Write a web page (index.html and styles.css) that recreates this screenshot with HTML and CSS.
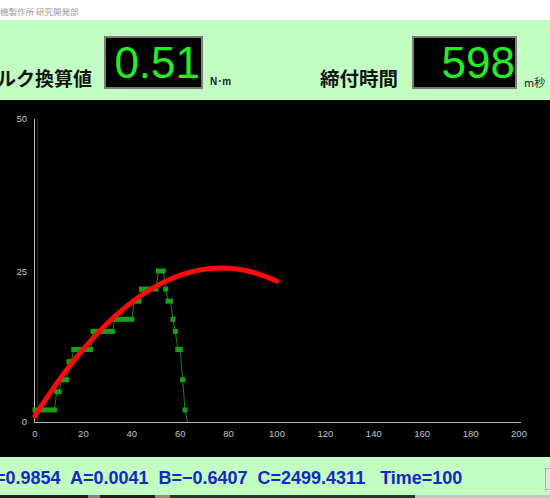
FILE: index.html
```html
<!DOCTYPE html>
<html lang="ja">
<head>
<meta charset="utf-8">
<title>締付モニタ</title>
<link rel="stylesheet" href="styles.css">
</head>
<body>
<div class="app">
  <div class="titlebar">機製作所 研究開発部</div>
  <div class="header">
    <div class="label label-torque">ルク換算値</div>
    <div class="display display-torque">0.51</div>
    <div class="unit unit-torque">N･m</div>
    <div class="label label-time">締付時間</div>
    <div class="display display-time">598</div>
    <div class="unit unit-time">m秒</div>
  </div>
  <svg class="chart" width="550" height="357" viewBox="0 0 550 357" xmlns="http://www.w3.org/2000/svg">
    <g class="ticks" font-family="Liberation Sans, Arial, sans-serif" font-size="9.5" fill="#c4c4c4">
      <text x="27" y="22" text-anchor="end">50</text>
      <text x="27" y="175" text-anchor="end">25</text>
      <text x="27" y="325" text-anchor="end">0</text>
      <text x="35" y="337" text-anchor="middle">0</text>
      <text x="83.4" y="337" text-anchor="middle">20</text>
      <text x="131.8" y="337" text-anchor="middle">40</text>
      <text x="180.2" y="337" text-anchor="middle">60</text>
      <text x="228.6" y="337" text-anchor="middle">80</text>
      <text x="277" y="337" text-anchor="middle">100</text>
      <text x="325.4" y="337" text-anchor="middle">120</text>
      <text x="373.8" y="337" text-anchor="middle">140</text>
      <text x="422.2" y="337" text-anchor="middle">160</text>
      <text x="470.6" y="337" text-anchor="middle">180</text>
      <text x="519" y="337" text-anchor="middle">200</text>
    </g>
    <line x1="37.7" y1="19" x2="37.7" y2="322" stroke="#0e4a0e" stroke-width="1"/>
    <line x1="34.5" y1="19" x2="34.5" y2="322.5" stroke="#b8b8b8" stroke-width="1"/>
    <line x1="34" y1="322.5" x2="521" y2="322.5" stroke="#b8b8b8" stroke-width="1"/>
    <polyline fill="none" stroke="#138a13" stroke-width="1"
      points="35,309.92 54.36,309.92 56.78,291.8 59.2,291.8 61.62,279.72 66.46,279.72 68.88,261.6 71.3,261.6 73.72,249.52 90.66,249.52 93.08,231.4 112.44,231.4 114.86,219.32 131.8,219.32 134.22,201.2 139.06,201.2 141.48,189.12 156,189.12 158.42,171 163.26,171 165.68,189.12 168.1,201.2 170.52,201.2 172.94,219.32 175.36,231.4 177.78,249.52 180.2,249.52 182.62,279.72 185.04,309.92 187.46,322"/>
    <g fill="#19a019">
      <rect x="32.5" y="307.42" width="24.36" height="5"/>
      <rect x="54.28" y="289.3" width="7.42" height="5"/>
      <rect x="59.12" y="277.22" width="9.84" height="5"/>
      <rect x="66.38" y="259.1" width="7.42" height="5"/>
      <rect x="71.22" y="247.02" width="21.94" height="5"/>
      <rect x="90.58" y="228.9" width="24.36" height="5"/>
      <rect x="112.36" y="216.82" width="21.94" height="5"/>
      <rect x="131.72" y="198.7" width="9.84" height="5"/>
      <rect x="138.98" y="186.62" width="19.52" height="5"/>
      <rect x="155.92" y="168.5" width="9.84" height="5"/>
      <rect x="163.18" y="186.62" width="5" height="5"/>
      <rect x="165.6" y="198.7" width="7.42" height="5"/>
      <rect x="170.44" y="216.82" width="5" height="5"/>
      <rect x="172.86" y="228.9" width="5" height="5"/>
      <rect x="175.28" y="247.02" width="7.42" height="5"/>
      <rect x="180.12" y="277.22" width="5" height="5"/>
      <rect x="182.54" y="307.42" width="5" height="5"/>
    </g>
    <path d="M35 315.88 Q156 123.9 277 181.18" fill="none" stroke="#ff0a0a" stroke-width="5" stroke-linecap="round"/>
  </svg>
  <div class="results">
    <div class="stats">=0.9854  A=0.0041  B=−0.6407  C=2499.4311   Time=100</div>
    <div class="side-button"></div>
  </div>
  <div class="taskstrip">
    <span class="seg seg-a"></span>
    <span class="seg seg-b"></span>
    <span class="seg seg-a2"></span>
    <span class="seg seg-b2"></span>
    <span class="seg seg-c"></span>
    <span class="seg seg-d"></span>
  </div>
</div>
</body>
</html>
```
FILE: styles.css
```css
html, body {
  margin: 0;
  padding: 0;
  background: #000;
}
body {
  width: 550px;
  height: 498px;
  overflow: hidden;
}
.app {
  width: 550px;
  height: 498px;
  display: flex;
  flex-direction: column;
  overflow: hidden;
}
.titlebar {
  height: 20px;
  flex: 0 0 20px;
  background: #ffffff;
  color: #9c9c9c;
  font-family: "Noto Sans CJK JP", sans-serif;
  font-size: 8.5px;
  line-height: 22px;
  padding-left: 0;
  white-space: nowrap;
}
.header {
  height: 80px;
  flex: 0 0 80px;
  box-sizing: border-box;
  background: #c2fec2;
  display: flex;
  align-items: flex-end;
  padding-bottom: 11px;
  white-space: nowrap;
}
.label {
  font-family: "Noto Sans CJK JP", sans-serif;
  font-weight: 700;
  font-size: 19px;
  line-height: 19px;
  color: #141414;
  margin-bottom: 2px;
}
.label-torque {
  margin-left: -3px;
}
.label-time {
  margin-left: 85px;
  font-size: 19.5px;
}
.display {
  box-sizing: border-box;
  height: 53px;
  border: 2px solid #7c7c7c;
  background: #000;
  color: #22ee22;
  font-family: "Liberation Sans", Arial, sans-serif;
  font-size: 44px;
  line-height: 49px;
  text-align: right;
}
.display-torque {
  width: 99px;
  margin-left: 12px;
  padding-right: 1px;
}
.display-time {
  width: 105px;
  margin-left: 14px;
  padding-right: 0;
}
.unit {
  font-family: "Liberation Sans", "Noto Sans CJK JP", sans-serif;
  font-weight: 700;
  font-size: 10px;
  line-height: 10px;
  color: #222;
  margin-left: 7px;
  margin-bottom: 2px;
}
.unit-torque {
  width: 25px;
}
.unit-time {
  font-family: "Noto Sans CJK JP", sans-serif;
  font-weight: 400;
  font-size: 11px;
}
.chart {
  display: block;
  flex: 0 0 357px;
  background: #000;
}
.results {
  height: 38px;
  flex: 0 0 38px;
  box-sizing: border-box;
  background: #c2fec2;
  display: flex;
  padding-top: 12px;
}
.stats {
  font-family: "Liberation Sans", Arial, sans-serif;
  font-weight: 700;
  font-size: 18px;
  line-height: 18px;
  color: #1428c4;
  white-space: pre;
  margin-left: -5px;
}
.side-button {
  margin-left: auto;
  margin-top: -1px;
  align-self: flex-start;
  width: 4px;
  height: 20px;
  background: #e4e4e4;
  border: 1px solid #adadad;
  border-right: none;
}
.taskstrip {
  flex: 1 1 auto;
  display: flex;
  background: #202020;
}
.seg {
  display: block;
  height: 100%;
}
.seg-a { width: 88px; background: #1e1e1e; }
.seg-b { width: 12px; background: #8c8264; }
.seg-a2 { width: 55px; background: #1e1e1e; }
.seg-b2 { width: 15px; background: #988e6e; }
.seg-c { width: 245px; background: #1c3a2e; }
.seg-d { flex: 1 1 auto; background: #c4c4c4; }
```
